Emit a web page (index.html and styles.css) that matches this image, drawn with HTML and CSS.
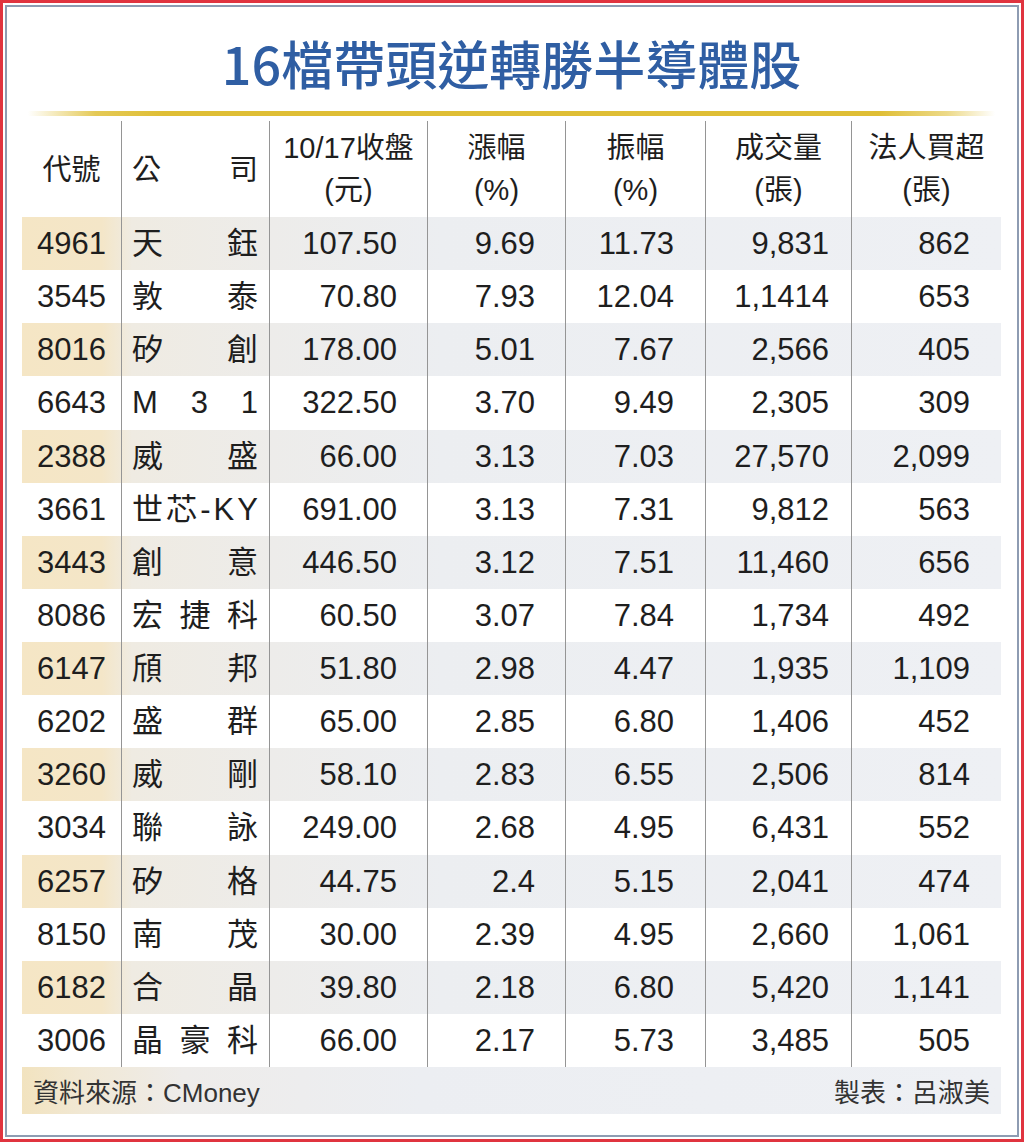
FILE: index.html
```html
<!DOCTYPE html>
<html lang="zh-Hant">
<head>
<meta charset="utf-8">
<title>16檔帶頭逆轉勝半導體股</title>
<link rel="stylesheet" href="styles.css">
</head>
<body>
<div class="frame">
  <div class="inner">
    <h1 class="title">16檔帶頭逆轉勝半導體股</h1>
    <div class="goldline"></div>
    <div class="table">
      <div class="row head">
        <div class="c code"><span>代號</span></div>
        <div class="c name"><span>公</span><span>司</span></div>
        <div class="c hc"><span>10/17收盤</span><span>(元)</span></div>
        <div class="c hc"><span>漲幅</span><span>(%)</span></div>
        <div class="c hc"><span>振幅</span><span>(%)</span></div>
        <div class="c hc"><span>成交量</span><span>(張)</span></div>
        <div class="c hc"><span>法人買超</span><span>(張)</span></div>
      </div>
      <div class="row odd"><div class="c code">4961</div><div class="c name"><span>天</span><span>鈺</span></div><div class="c n p">107.50</div><div class="c n g">9.69</div><div class="c n a">11.73</div><div class="c n v">9,831</div><div class="c n b">862</div></div>
      <div class="row"><div class="c code">3545</div><div class="c name"><span>敦</span><span>泰</span></div><div class="c n p">70.80</div><div class="c n g">7.93</div><div class="c n a">12.04</div><div class="c n v">1,1414</div><div class="c n b">653</div></div>
      <div class="row odd"><div class="c code">8016</div><div class="c name"><span>矽</span><span>創</span></div><div class="c n p">178.00</div><div class="c n g">5.01</div><div class="c n a">7.67</div><div class="c n v">2,566</div><div class="c n b">405</div></div>
      <div class="row"><div class="c code">6643</div><div class="c name"><span>M</span><span>3</span><span>1</span></div><div class="c n p">322.50</div><div class="c n g">3.70</div><div class="c n a">9.49</div><div class="c n v">2,305</div><div class="c n b">309</div></div>
      <div class="row odd"><div class="c code">2388</div><div class="c name"><span>威</span><span>盛</span></div><div class="c n p">66.00</div><div class="c n g">3.13</div><div class="c n a">7.03</div><div class="c n v">27,570</div><div class="c n b">2,099</div></div>
      <div class="row"><div class="c code">3661</div><div class="c name"><span>世</span><span>芯</span><span>-</span><span>K</span><span>Y</span></div><div class="c n p">691.00</div><div class="c n g">3.13</div><div class="c n a">7.31</div><div class="c n v">9,812</div><div class="c n b">563</div></div>
      <div class="row odd"><div class="c code">3443</div><div class="c name"><span>創</span><span>意</span></div><div class="c n p">446.50</div><div class="c n g">3.12</div><div class="c n a">7.51</div><div class="c n v">11,460</div><div class="c n b">656</div></div>
      <div class="row"><div class="c code">8086</div><div class="c name"><span>宏</span><span>捷</span><span>科</span></div><div class="c n p">60.50</div><div class="c n g">3.07</div><div class="c n a">7.84</div><div class="c n v">1,734</div><div class="c n b">492</div></div>
      <div class="row odd"><div class="c code">6147</div><div class="c name"><span>頎</span><span>邦</span></div><div class="c n p">51.80</div><div class="c n g">2.98</div><div class="c n a">4.47</div><div class="c n v">1,935</div><div class="c n b">1,109</div></div>
      <div class="row"><div class="c code">6202</div><div class="c name"><span>盛</span><span>群</span></div><div class="c n p">65.00</div><div class="c n g">2.85</div><div class="c n a">6.80</div><div class="c n v">1,406</div><div class="c n b">452</div></div>
      <div class="row odd"><div class="c code">3260</div><div class="c name"><span>威</span><span>剛</span></div><div class="c n p">58.10</div><div class="c n g">2.83</div><div class="c n a">6.55</div><div class="c n v">2,506</div><div class="c n b">814</div></div>
      <div class="row"><div class="c code">3034</div><div class="c name"><span>聯</span><span>詠</span></div><div class="c n p">249.00</div><div class="c n g">2.68</div><div class="c n a">4.95</div><div class="c n v">6,431</div><div class="c n b">552</div></div>
      <div class="row odd"><div class="c code">6257</div><div class="c name"><span>矽</span><span>格</span></div><div class="c n p">44.75</div><div class="c n g">2.4</div><div class="c n a">5.15</div><div class="c n v">2,041</div><div class="c n b">474</div></div>
      <div class="row"><div class="c code">8150</div><div class="c name"><span>南</span><span>茂</span></div><div class="c n p">30.00</div><div class="c n g">2.39</div><div class="c n a">4.95</div><div class="c n v">2,660</div><div class="c n b">1,061</div></div>
      <div class="row odd"><div class="c code">6182</div><div class="c name"><span>合</span><span>晶</span></div><div class="c n p">39.80</div><div class="c n g">2.18</div><div class="c n a">6.80</div><div class="c n v">5,420</div><div class="c n b">1,141</div></div>
      <div class="row"><div class="c code">3006</div><div class="c name"><span>晶</span><span>豪</span><span>科</span></div><div class="c n p">66.00</div><div class="c n g">2.17</div><div class="c n a">5.73</div><div class="c n v">3,485</div><div class="c n b">505</div></div>
    </div>
    <div class="footer">
      <span>資料來源：CMoney</span>
      <span>製表：呂淑美</span>
    </div>
  </div>
</div>
</body>
</html>
```

FILE: styles.css
```css
html, body {
  margin: 0;
  padding: 0;
  background: #ffffff;
}

body {
  width: 1024px;
  height: 1142px;
  font-family: "Liberation Sans", "Noto Sans CJK TC", sans-serif;
  color: #1e1e1e;
}

.frame {
  box-sizing: border-box;
  width: 1024px;
  height: 1142px;
  border: 3px solid #e0343f;
  padding: 2px;
  background: #ffffff;
}

.inner {
  box-sizing: border-box;
  height: 100%;
  border: 2px solid #8e9cb2;
  padding: 0 16px 0 15px;
  display: flex;
  flex-direction: column;
}

.title {
  margin: 26px 0 0 0;
  height: 60px;
  line-height: 60px;
  font-family: "Noto Sans CJK TC", sans-serif;
  font-size: 52px;
  font-weight: 500;
  color: #2f5ea3;
  text-align: center;
  letter-spacing: 0px;
}

.goldline {
  margin: 18px 6px 0 6px;
  height: 5px;
  background: linear-gradient(to right,
    rgba(224, 192, 56, 0) 0%,
    rgba(224, 192, 56, 0.85) 7%,
    #dfbe35 14%,
    #dfbe35 88%,
    rgba(224, 192, 56, 0.6) 95%,
    rgba(224, 192, 56, 0) 100%);
}

.table {
  margin-top: 5px;
  display: flex;
  flex-direction: column;
}

.row {
  display: grid;
  grid-template-columns: 99px 148px 158px 138px 140px 146px 150px;
  height: 53.125px;
  font-size: 31px;
  line-height: 53px;
}

.row.head {
  height: 96px;
  font-size: 29px;
  line-height: 42px;
}

.row.odd {
  background: linear-gradient(to right,
    #f5e6c5 0px,
    #f4e6c8 80px,
    #efebe2 110px,
    #edecea 250px,
    #eceef1 420px,
    #eef0f4 979px);
}

.c {
  box-sizing: border-box;
  white-space: nowrap;
}

.c + .c {
  border-left: 1px solid #959595;
}

.code {
  text-align: center;
}

.head .code {
  display: flex;
  align-items: center;
  justify-content: center;
  padding-top: 2px;
}

.name {
  display: flex;
  justify-content: space-between;
  padding: 0 11px 0 10px;
}

.head .name {
  align-items: center;
  padding-top: 2px;
}

.hc {
  display: flex;
  flex-direction: column;
  align-items: center;
  justify-content: center;
}

.n {
  text-align: right;
}

.p { padding-right: 30px; }
.g { padding-right: 30px; }
.a { padding-right: 31px; }
.v { padding-right: 22px; }
.b { padding-right: 31px; }

.footer {
  height: 47px;
  display: flex;
  justify-content: space-between;
  align-items: center;
  padding: 0 11px 0 11px;
  font-size: 26px;
  color: #333333;
  background: linear-gradient(to right,
    #f2e3bf 0px,
    #f1e8d4 60px,
    #eeecea 160px,
    #eceef2 400px,
    #eef0f4 979px);
}
```
